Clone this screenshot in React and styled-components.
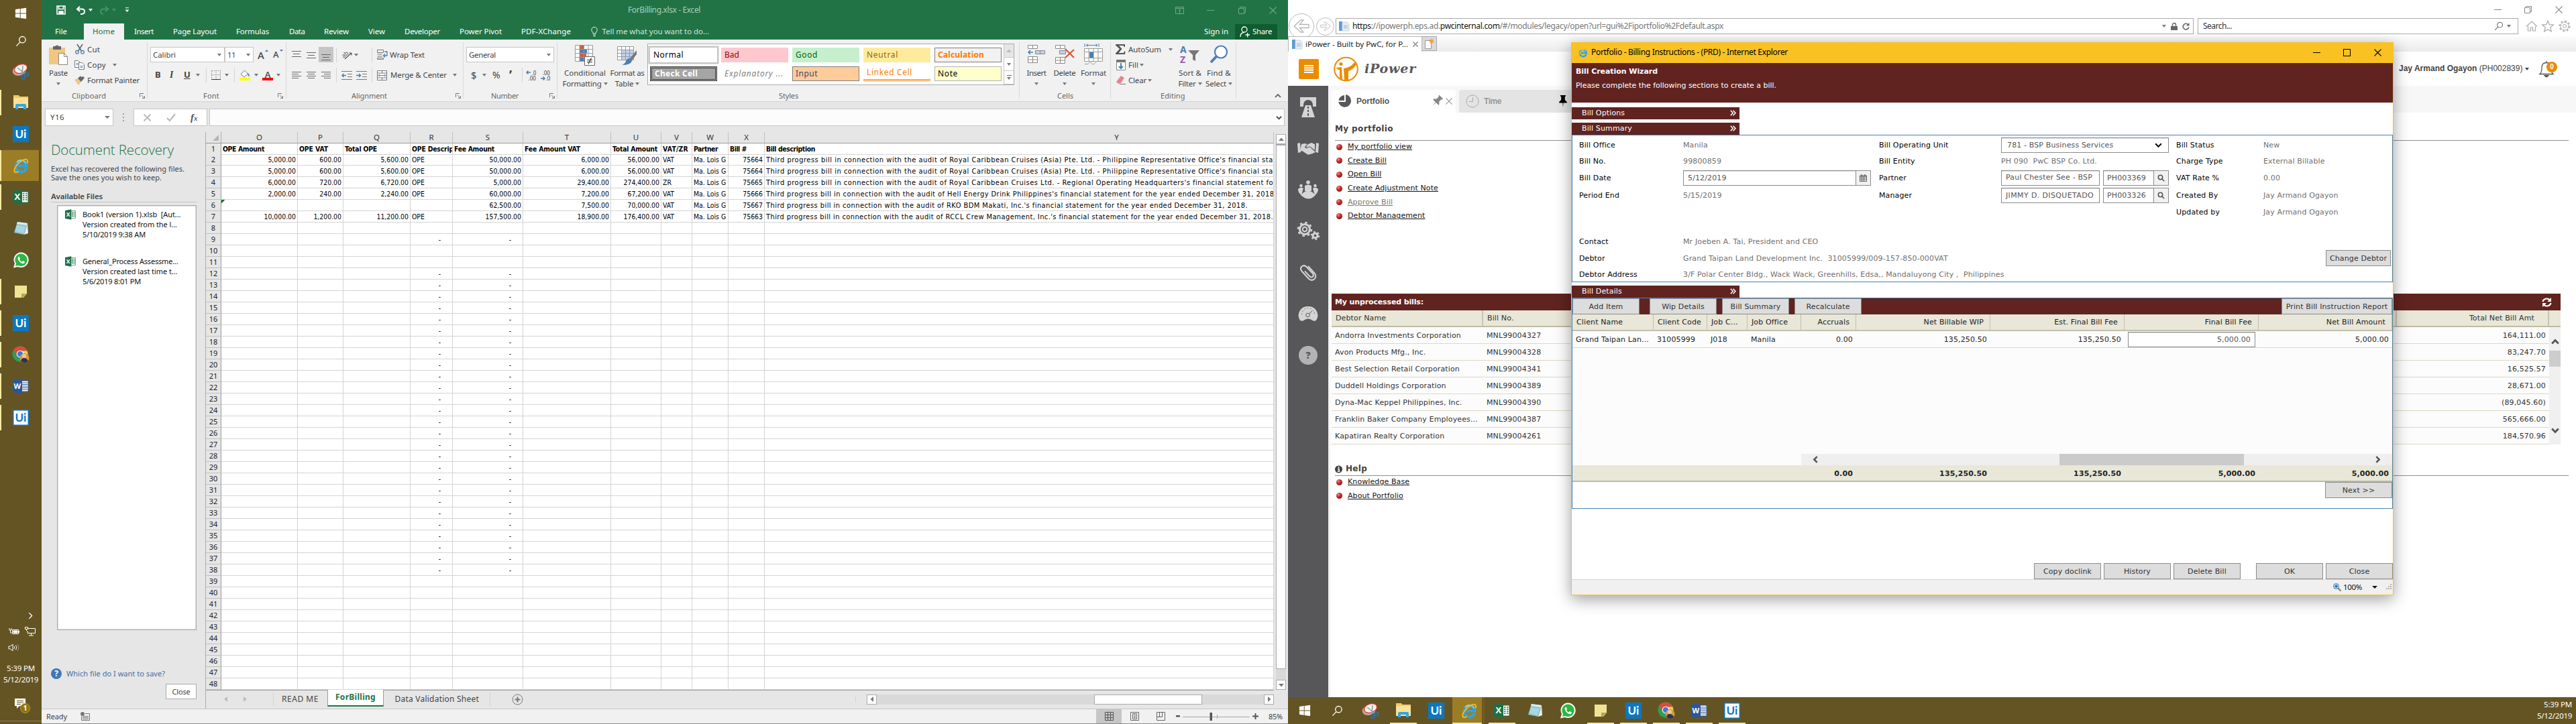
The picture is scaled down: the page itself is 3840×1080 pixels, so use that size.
import React, { useLayoutEffect, useRef, useState } from "react";
import styled, { createGlobalStyle, css } from "styled-components";

const Global = createGlobalStyle`
  *{box-sizing:border-box}
  html,body{margin:0;padding:0;background:#fff}
  body{width:3840px;height:1080px;overflow:hidden;font-family:"Noto Sans","Open Sans",sans-serif;font-size:11.5px;color:#444}
  svg{display:block;flex:none;overflow:visible}
`;

const UI = `"Noto Sans","Open Sans",sans-serif`;
const VERDANA = `"DejaVu Sans",sans-serif`;
const ARIAL = `"Liberation Sans",sans-serif`;
const CELL = `"DejaVu Sans Condensed","DejaVu Sans",sans-serif`;
const MAROON = "#602320";
const OLIVE = "#655423";
const BEIGE = "#e8e7d8";

/* ---------- text that keeps a given measure ---------- */
const Txt = styled.span`
  display:inline-block;white-space:pre;line-height:1.2;flex:none;
  ${p => p.$s && css`font-size:${p.$s}px;`}
  ${p => p.$c && css`color:${p.$c};`}
  ${p => p.$b && css`font-weight:${p.$b === true ? 700 : p.$b};`}
  ${p => p.$i && css`font-style:italic;`}
  ${p => p.$f && css`font-family:${p.$f};`}
`;
function Fit({ w, children, ...rest }) {
  const ref = useRef(null);
  const [ls, setLs] = useState(0);
  useLayoutEffect(() => {
    const el = ref.current;
    const range = document.createRange();
    range.selectNodeContents(el);
    setLs((w - range.getBoundingClientRect().width) / el.textContent.length);
  }, [w]);
  return <Txt ref={ref} style={{ letterSpacing: ls + "px" }} {...rest}>{children}</Txt>;
}

/* ---------- a row whose children start at tab stops ---------- */
const Stops = styled.div`
  display:grid;align-items:center;justify-items:start;
  padding-left:${p => p.$at[0]}px;
  grid-template-columns:${p => p.$at.slice(1).map((v, i) => `${v - p.$at[i]}px`).join(" ")} max-content;
  height:${p => p.$h}px;
  margin-top:${p => p.$mt || 0}px;
`;

const Tri = styled.i`
  width:0;height:0;border:3px solid transparent;border-bottom:0;border-top:4px solid ${p => p.$c || "#777"};
  border-left-width:${p => p.$w || 3}px;border-right-width:${p => p.$w || 3}px;
`;
const VLine = styled.i`width:1px;height:${p => p.$h || 22}px;background:#d4d4d4;`;

/* ================= icons ================= */
const WinIcon = ({ s = 20 }) => <svg width={s} height={s} viewBox="0 0 20 20" fill="#fff"><path d="M1 3.4 8.6 2.3V9.4H1zM9.6 2.2 19 .9V9.4H9.6zM1 10.5H8.6v7.1L1 16.5zM9.6 10.5H19V19L9.6 17.7z" /></svg>;
const SearchIcon = ({ s = 18, c = "#fff" }) => <svg width={s} height={s} viewBox="0 0 18 18" fill="none" stroke={c} strokeWidth="1.4"><circle cx="11" cy="6.6" r="5" /><path d="M7.5 10.2 1.5 16.5" /></svg>;
const SnipIcon = () => <svg width="26" height="26" viewBox="0 0 26 26"><ellipse cx="11" cy="12" rx="10.5" ry="7.5" transform="rotate(-20 11 12)" fill="#c9a39b" /><ellipse cx="13" cy="9.5" rx="10.5" ry="7" transform="rotate(-20 13 9.5)" fill="#d33a2c" /><ellipse cx="13" cy="9.5" rx="9.2" ry="5.8" transform="rotate(-20 13 9.5)" fill="#f4f1ef" /><path d="M8 8 19 17M16 5 15 18" stroke="#8f9aa3" strokeWidth="1.6" /><circle cx="22" cy="18" r="2.600" fill="none" stroke="#2c6fb0" strokeWidth="1.8" /><circle cx="16.500" cy="22" r="2.600" fill="none" stroke="#2c6fb0" strokeWidth="1.8" /></svg>;
const ExplorerIcon = () => <svg width="24" height="22" viewBox="0 0 24 22"><path d="M1 0h8l1.500 2H23v15H1z" fill="#f3c95c" /><path d="M1 4h22v15H1z" fill="#fbe29a" /><path d="M4 21v-6q0-2 2-2h12q2 0 2 2v6h-4v-4H8v4z" fill="#35a7e0" /></svg>;
const UiIcon = ({ inv }) => <svg width="24" height="24" viewBox="0 0 24 24"><rect width="24" height="24" fill={inv ? "#fff" : "#0a77c4"} />{inv && <rect x=".75" y=".75" width="22.5" height="22.5" fill="none" stroke="#0a77c4" strokeWidth="1.5" />}<text x="12" y="18" textAnchor="middle" fontFamily="Lato" fontWeight="700" fontSize="17" fill={inv ? "#0a77c4" : "#fff"}>Ui</text></svg>;
const IeIcon = ({ s = 24 }) => <svg width={s} height={s} viewBox="0 0 24 24" fill="none"><path d="M20.3 15.6A8 8 0 1 1 20.6 12.6H8" stroke="#2ba4e6" strokeWidth="4" /><path d="M19.6 8.5A8 8 0 0 0 6 7" stroke="#8fd8f8" strokeWidth="1.6" /><path d="M21.5 8.5c2-5-1-7.500-7-4.300C7 8 1 17 2.600 21c1 2 4 1.300 6-.2" stroke="#f5b921" strokeWidth="2" /></svg>;
const OfficeIcon = ({ k = "X", s = 24 }) => {
  const c = k === "X" ? "#1e7145" : "#2b579a";
  return <svg width={s} height={s} viewBox="0 0 24 24"><rect x="12" y="4" width="11" height="16" fill="#fff" stroke={c} strokeWidth="1" />{k === "X" ? <path d="M15 7h2.500M19 7h2.500M15 10h2.500M19 10h2.500M15 13h2.500M19 13h2.500M15 16h2.500M19 16h2.500" stroke={c} strokeWidth="1.700" /> : <path d="M14 7h8M14 9.500h8M14 12h8M14 14.500h8M14 17h8" stroke={c} strokeWidth="1.100" />}<path d="M0 3 14 .5v23L0 21z" fill={c} /><text x="6.800" y="16.300" textAnchor="middle" fontFamily="Open Sans" fontWeight="700" fontSize={k === "X" ? 13 : 11} fill="#fff">{k}</text></svg>;
};
const NotepadIcon = () => <svg width="24" height="24" viewBox="0 0 24 24"><path d="M7 2 22 4 17 21 2 18z" fill="#8ec5d2" /><path d="M7 2 22 4 21 7 6 5z" fill="#d8eef2" /><path d="M6 7 19 9 16 19 4 16z" fill="#a9d7e0" /><path d="M22 4 23 19 17 21z" fill="#e9eef0" /></svg>;
const WhatsIcon = () => <svg width="24" height="24" viewBox="0 0 24 24"><path d="M12.500.5A11 11 0 0 0 3 17L1 23.500 7.500 22A11.300 11.300 0 1 0 12.500.5z" fill="#fff" /><path d="M12.500 2.500A9.200 9.200 0 0 0 5 17l-1 4 4-1A9.300 9.300 0 1 0 12.500 2.500z" fill="#2cb742" /><path d="M9.500 6.500c-2 .5-2.500 2.500-1.500 4.500 1.500 3.500 4 5.500 7 6.200 2 .2 3-1 3-2.600l-3-1.500-1.300 1.500c-1.700-.6-3-1.900-3.700-3.500L11 9.800z" fill="#fff" /></svg>;
const StickyIcon = () => <svg width="20" height="20" viewBox="0 0 20 20"><path d="M1 1h18v12l-5 6H1z" fill="#f1e394" /><path d="M11 19v-6h8l-6 6z" fill="#b3a45c" /></svg>;
const ChromeIcon = () => <svg width="26" height="26" viewBox="0 0 26 26"><circle cx="12" cy="12" r="11.500" fill="#2e9e55" /><path d="M2 6.500A11.500 11.500 0 0 1 22.500 7.500H12A5 5 0 0 0 7.500 14z" fill="#dd4b3e" /><path d="M22.500 7.500A11.500 11.500 0 0 1 13 23.500L17 12 12 7.500z" fill="#fccd43" /><circle cx="12" cy="12" r="5.300" fill="#fff" /><circle cx="12" cy="12" r="4.200" fill="#3b78e7" /><circle cx="18.500" cy="18" r="7" fill="#d99a3c" /><circle cx="18" cy="15" r="3" fill="#e9c9ae" /><path d="M13 22.500q1-4.500 5-4.500t6 4.500q-5 5-11 0z" fill="#2c3352" /></svg>;
const Chevron = ({ d = "up", s = 10, c = "#555", w = 2 }) => {
  const p = { up: "M1 7 5 3 9 7", down: "M1 3 5 7 9 3", left: "M7 1 3 5 7 9", right: "M3 1 7 5 3 9" }[d];
  return <svg width={s} height={s} viewBox="0 0 10 10" fill="none" stroke={c} strokeWidth={w}><path d={p} /></svg>;
};
const SmallTri = ({ d = "up", c = "#777" }) => {
  const p = { up: "M0 6 4 1.500 8 6z", down: "M0 2 4 6.500 8 2z", left: "M6 0v8L1.500 4z", right: "M2 0v8l4.500-4z" }[d];
  return <svg width="8" height="8" viewBox="0 0 8 8" fill={c}><path d={p} /></svg>;
};
const WinMin = ({ c, s = 11 }) => <svg width={s} height="11" viewBox="0 0 11 11"><path d="M0 5.500H11" stroke={c} /></svg>;
const WinMax = ({ c }) => <svg width="11" height="11" viewBox="0 0 11 11"><rect x=".5" y=".5" width="10" height="10" fill="none" stroke={c} /></svg>;
const WinRestore = ({ c }) => <svg width="11" height="11" viewBox="0 0 11 11" fill="none" stroke={c}><path d="M.5 2.500h8v8h-8zM2.500 2.500v-2h8v8h-2" /></svg>;
const WinX = ({ c, s = 11, w = 1.100 }) => <svg width={s} height={s} viewBox="0 0 11 11" stroke={c} strokeWidth={w}><path d="M.5.5 10.500 10.500M10.500.5.5 10.500" /></svg>;
const Launcher = () => <svg width="8" height="8" viewBox="0 0 8 8" fill="none" stroke="#777"><path d="M.5 6V.5H6M3 3l4 4M7.500 4v3.500H4" /></svg>;
const Lines = ({ rows, w = 14, h = 14 }) => <svg width={w} height={h} viewBox={`0 0 ${w} ${h}`} stroke="#666">{rows.map(([x1, x2, y]) => <path key={y} d={`M${x1} ${y}H${x2}`} />)}</svg>;
const MagIcon = () => <svg width="11" height="11" viewBox="0 0 11 11" fill="none" stroke="#555" strokeWidth="1.600"><circle cx="4.500" cy="4.500" r="3.200" /><path d="M7 7l3.200 3.200" /></svg>;

/* ================= taskbars ================= */
const ITEMS = [
  [SnipIcon, 0], [ExplorerIcon, 1], [UiIcon, 0], [IeIcon, 2], [OfficeIcon, 1], [NotepadIcon, 0], [WhatsIcon, 0],
  [StickyIcon, 1], [UiIcon, 1], [ChromeIcon, 1], [() => <OfficeIcon k="W" />, 1], [() => <UiIcon inv />, 1],
];
const SideBar = styled.nav`width:62px;height:1080px;background:${OLIVE};display:flex;flex-direction:column;align-items:center;color:#fff;flex:none;`;
const SideItem = styled.div`
  width:62px;height:${p => p.$h || 47}px;display:flex;align-items:center;justify-content:center;
  ${p => p.$on === 1 && css`background:linear-gradient(#fbe9a4,#fbe9a4) 0 50%/2px 38px no-repeat;`}
  ${p => p.$on === 2 && css`background:linear-gradient(#fbe9a4,#fbe9a4) 0 50%/2px 46px no-repeat,linear-gradient(#9b7d26,#9b7d26) 0 50%/58px 46px no-repeat,linear-gradient(#524519,#524519) 58px 50%/1px 46px no-repeat,#6f5c26;`}
`;
const Tray = styled.div`margin-top:auto;width:62px;height:176px;display:flex;flex-direction:column;padding-top:6px;`;
const ClockText = styled.div`display:flex;flex-direction:column;align-items:center;color:#fff;gap:3px;margin-top:12px;`;
const Notice = styled.div`margin:21px auto 0;position:relative;width:18px;`;
const NoticeCount = styled.b`position:absolute;left:8px;top:7px;width:15px;height:15px;border-radius:50%;background:#8f7212;border:1px solid #b79a3c;font-size:10px;line-height:13px;text-align:center;color:#fff;`;
const BaseRule = styled.i`display:block;width:62px;height:1px;background:#8d8060;margin-top:auto;margin-bottom:4px;`;

function SideTaskbar() {
  return <SideBar>
    <SideItem $h={40}><WinIcon s={18} /></SideItem>
    <SideItem $h={42}><SearchIcon s={17} /></SideItem>
    {ITEMS.map(([I, on], i) => <SideItem key={i} $on={on}><I /></SideItem>)}
    <Tray>
      <Stops $at={[40]} $h={16}><Chevron d="right" c="#fff" w={1.200} s={11} /></Stops>
      <Stops $at={[13, 37]} $h={24} $mt={4}>
        <svg width="16" height="12" viewBox="0 0 16 12" fill="none" stroke="#fff"><path d="M5.500 3.500h9v6h-9z" /><path d="M7 5h6v3H7z" fill="#fff" /><path d="M15.500 5v3M1 1v3h3V1M2.500 4v4h2" /></svg>
        <svg width="16" height="14" viewBox="0 0 16 14" fill="none" stroke="#fff"><path d="M5 2.500h10.500v7H4V6M9.500 10v3M6 13h7M.5.5h4v3h-4zM2.500 4v2" /></svg>
      </Stops>
      <Stops $at={[12]} $h={24}><svg width="17" height="14" viewBox="0 0 17 14" fill="none" stroke="#fff"><path d="M1 5h2.500L7 2v10L3.500 9H1zM9 5q1.500 2 0 4M11.500 3.500q2.500 3.500 0 7" /><path d="M14 2q3.500 5 0 10" opacity=".4" /></svg></Stops>
      <ClockText><Fit w={42} $s={11.5}>5:39 PM</Fit><Fit w={52} $s={11.5}>5/12/2019</Fit></ClockText>
      <Notice><svg width="16" height="15" viewBox="0 0 16 15"><path d="M0 0h16v11H7l-4 4v-4H0z" fill="#fff" /><path d="M3 3.500h10M3 6h10M3 8.500h6" stroke={OLIVE} /></svg><NoticeCount>1</NoticeCount></Notice>
      <BaseRule />
    </Tray>
  </SideBar>;
}

const BottomBar = styled.nav`height:40px;background:${OLIVE};display:flex;flex:none;`;
const BottomItem = styled.div`
  width:49px;height:40px;display:flex;align-items:center;justify-content:center;
  ${p => p.$on === 1 && css`background:linear-gradient(#fbe9a4,#fbe9a4) 50% 100%/40px 2px no-repeat;`}
  ${p => p.$on === 2 && css`background:linear-gradient(#fbe9a4,#fbe9a4) 0 100%/44px 2px no-repeat,linear-gradient(#9b7d26,#9b7d26) 0 0/44px 40px no-repeat,linear-gradient(#6f5c26,#6f5c26) 45px 0/3px 40px no-repeat;`}
`;
const BottomClock = styled.div`margin-left:auto;width:52px;margin-right:6px;display:flex;flex-direction:column;align-items:flex-end;padding-top:4px;gap:3px;color:#fff;`;
const Lead = styled.i`width:${p => p.$w}px;flex:none;`;
function BottomTaskbar() {
  return <BottomBar>
    <BottomItem><WinIcon s={18} /></BottomItem>
    <BottomItem><SearchIcon s={17} /></BottomItem>
    {ITEMS.map(([I, on], i) => <BottomItem key={i} $on={on}><I /></BottomItem>)}
    <BottomClock><Fit w={42} $s={11.5}>5:39 PM</Fit><Fit w={52} $s={11.5}>5/12/2019</Fit></BottomClock>
  </BottomBar>;
}

/* ================= Excel ================= */
const ExcelWin = styled.section`width:1858px;height:1080px;display:flex;flex-direction:column;background:#e6e6e6;flex:none;`;
const Green = styled.header`background:#217346;height:59px;color:#fff;flex:none;`;
const HomeTab = styled.div`width:60px;height:24px;background:#f1f1f1;color:#217346;display:flex;align-items:center;padding-left:13px;`;
const ShareTab = styled.div`width:63px;height:23px;background:#0e5c2f;display:flex;align-items:center;gap:4px;padding-left:7px;`;

function ExcelHeader() {
  const c = "#6fa688";
  return <Green>
    <Stops $at={[22, 51, 70, 86, 105, 124, 874, 1690, 1737, 1784, 1830]} $h={30}>
      <svg width="14" height="14" viewBox="0 0 14 14" fill="none" stroke="#fff" strokeWidth="1.600"><path d="M1 1h12v12H1zM3.500 1v4.500h7V1" /><path d="M4 13V9h6v4" fill="#fff" /></svg>
      <svg width="15" height="13" viewBox="0 0 15 13" fill="none" stroke="#fff" strokeWidth="2"><path d="M6 .8 2 4.500 6 8M2 4.500h7q4 0 4 3.500T9 12H7" /></svg>
      <Tri $c="#fff" />
      <svg width="15" height="13" viewBox="0 0 15 13" fill="none" stroke="#4d9069" strokeWidth="2"><path d="M9 .8 13 4.500 9 8M13 4.500H6Q2 4.500 2 8t4 4" /></svg>
      <Tri $c="#4d9069" />
      <svg width="7" height="8" viewBox="0 0 7 8"><path d="M1 .7h5" stroke="#fff" /><path d="M.5 3.500h6l-3 3.500z" fill="#fff" /></svg>
      <Fit w={108} $s={12} $c="#a8cfb9">ForBilling.xlsx - Excel</Fit>
      <svg width="13" height="11" viewBox="0 0 13 11" fill="none" stroke={c}><path d="M.5.5h12v10H.5zM.5 2.500h12M6.500 10V4.500M4.500 6l2-1.800 2 1.800" /></svg>
      <WinMin c={c} /><WinRestore c={c} /><WinX c={c} />
    </Stops>
    <Stops $at={[20, 63, 138, 196, 290, 369, 421, 487, 541, 623, 715, 819, 835.5, 1733, 1779]} $h={24} $mt={5}>
      <Fit w={18}>File</Fit>
      <HomeTab><Fit w={33}>Home</Fit></HomeTab>
      <Fit w={29}>Insert</Fit><Fit w={65}>Page Layout</Fit><Fit w={49}>Formulas</Fit><Fit w={23.5}>Data</Fit>
      <Fit w={37}>Review</Fit><Fit w={25}>View</Fit><Fit w={53}>Developer</Fit><Fit w={63}>Power Pivot</Fit><Fit w={74}>PDF-XChange</Fit>
      <svg width="10" height="15" viewBox="0 0 10 15" fill="none" stroke="#e8f2ec"><path d="M3 10C3 7.500.8 7 .8 4.600a4.200 4.200 0 0 1 8.400 0C9.200 7 7 7.500 7 10zM3 12h4M3.500 14h3" /></svg>
      <Fit w={159.5} $c="#cfe3d8">Tell me what you want to do...</Fit>
      <Fit w={36}>Sign in</Fit>
      <ShareTab>
        <svg width="15" height="17" viewBox="0 0 15 17" fill="none" stroke="#fff" strokeWidth="1.300"><circle cx="7" cy="5" r="4" /><path d="M1 16q0-6 5-6.500M8.500 13H15M11.700 10v6.500" /></svg>
        <Fit w={29}>Share</Fit>
      </ShareTab>
    </Stops>
  </Green>;
}

const Ribbon = styled.div`height:93px;background:#f1f1f1;border-bottom:1px solid #d5d5d5;display:flex;flex:none;`;
const Group = styled.div`width:${p => p.$w}px;height:92px;background:linear-gradient(#d9d9d9,#d9d9d9) 100% 4px/1px 84px no-repeat;`;
const Body = styled.div`height:76px;display:flex;align-items:flex-start;`;
const Col = styled.div`width:${p => p.$w ? p.$w + "px" : "auto"};padding-top:${p => p.$pt || 0}px;flex:none;`;
const Big = styled.div`width:${p => p.$w}px;margin-left:${p => p.$ml || 0}px;padding-top:${p => p.$pt || 8}px;display:flex;flex-direction:column;align-items:center;flex:none;`;
const BigIcon = styled.div`height:${p => p.$h || 34}px;`;
const BigLine = styled.div`height:16px;display:flex;align-items:center;gap:3px;`;
const Combo = styled.div`width:${p => p.$w}px;height:23px;background:#fff;border:1px solid #c6c6c6;display:flex;align-items:center;justify-content:space-between;padding:0 4px 0 3px;`;
const Sel = styled.div`width:22px;height:23px;background:#c5c5c5;display:flex;align-items:center;justify-content:center;`;
const Gallery = styled.div`width:547px;height:62px;margin-top:6px;border:1px solid #ababab;background:#fff;display:flex;`;
const Swatches = styled.div`width:531px;display:grid;grid-template-columns:repeat(5,100px);grid-auto-rows:22px;gap:6px;padding:5px 0 0 3px;`;
const Swatch = styled.div`
  display:flex;align-items:center;padding-left:${p => p.$bd ? 4 : 5}px;background:${p => p.$bg || "#fff"};color:${p => p.$fg || "#000"};
  ${p => p.$bd && css`border:${p.$bd};`}
  ${p => p.$ring && css`box-shadow:0 0 0 2.500px #c6c6c6;`}
  ${p => p.$ul && css`border-bottom:3px double #ff8001;`}
`;
const GScroll = styled.div`width:15px;border-left:1px solid #c6c6c6;display:grid;grid-template-rows:20px 20px 20px;`;
const GBtn = styled.div`display:flex;flex-direction:column;gap:2px;align-items:center;justify-content:center;border-bottom:1px solid #c6c6c6;background:${p => p.$off ? "#e6e6e6" : "#fff"};`;
const Bar = styled.i`width:7px;height:1px;background:#666;`;
const FontStep = styled.div`display:flex;align-items:flex-start;gap:1px;`;

const PasteI = () => <svg width="28" height="31" viewBox="0 0 28 31"><path d="M0 4h24v25H0z" fill="#eec783" /><path d="M6 2h3q3-3 6 0h3v5H6z" fill="#666" /><path d="M14.500 12.500h8l5 5v12h-13z" fill="#fff" stroke="#888" /><path d="M22.500 12.500v5h5" fill="none" stroke="#888" /></svg>;
const CutI = () => <svg width="14" height="15" viewBox="0 0 14 15" fill="none"><path d="M3 0 9.500 10M11 0 4.500 10" stroke="#666" strokeWidth="1.600" /><circle cx="3" cy="11.800" r="2.300" stroke="#4a7fb5" strokeWidth="1.300" /><circle cx="11" cy="11.800" r="2.300" stroke="#4a7fb5" strokeWidth="1.300" /></svg>;
const CopyI = () => <svg width="15" height="14" viewBox="0 0 15 14" fill="#fff" stroke="#777"><path d="M.5.5h5l3 3v7h-8z" /><path d="M6.500 3.500h5l3 3v7h-8z" /><path d="M2.500 4.500h3M2.500 6.500h3M8.500 8.500h4M8.500 10.500h4" stroke="#4a7fb5" /></svg>;
const BrushI = () => <svg width="15" height="14" viewBox="0 0 15 14"><path d="M0 6 5 4l5 5-4 5z" fill="#eec783" /><path d="M5 4l5 5 5-6-2-2-3 1-1-2z" fill="#666" /></svg>;
const OrientI = () => <svg width="17" height="15" viewBox="0 0 17 15"><text x="1" y="11" fontSize="9" transform="rotate(-40 5 9)" fontFamily="Noto Sans" fill="#555">ab</text><path d="M5 14 15 5M15 5v3.500M15 5h-3.500" stroke="#555" strokeWidth="1.200" fill="none" /></svg>;
const WrapI = () => <svg width="16" height="15" viewBox="0 0 16 15" fill="none" stroke="#777"><path d="M.5.500h9v4h-9zM.5 7h7M.5 10h7M.5 12.500h9v2h-9z" /><path d="M11 3h4v6H9.500M12 6.500 9.500 9l2.500 2.500" stroke="#4a7fb5" strokeWidth="1.300" /></svg>;
const MergeI = () => <svg width="15" height="15" viewBox="0 0 15 15" fill="#fff" stroke="#777"><path d="M.5.500h14v14H.5zM.5 4h14M.5 11h14M7.500.5V4M7.500 11v3.500" /><path d="M2 7.500h11M4 5.500l-2 2 2 2M11 5.500l2 2-2 2" stroke="#4a7fb5" fill="none" /></svg>;
const IndentI = ({ r }) => <svg width="16" height="13" viewBox="0 0 16 13" fill="none" stroke="#777"><path d="M0 .5h16M9 4.500h7M9 8.500h7M0 12.500h16" /><path d={r ? "M0 6.500h6M4 4l2.500 2.500L4 9" : "M1 6.500h6M3.500 4 1 6.500 3.500 9"} stroke="#4a7fb5" strokeWidth="1.500" /></svg>;
const DecI = ({ inc }) => <svg width="15" height="17" viewBox="0 0 15 17" fontFamily="Noto Sans" fontSize="8" fill="#444">{inc ? <><text x="7.500" y="7.500">.0</text><text x="2.500" y="16">.00</text></> : <><text x="2.500" y="7.500">.00</text><text x="7.500" y="16">.0</text></>}<path d={inc ? "M0 4h6M2.500 1.500 0 4l2.500 2.500" : "M0 13h6M3.500 10.500 6 13l-2.500 2.500"} stroke="#4a7fb5" strokeWidth="1.500" fill="none" /></svg>;
const GridIcon = ({ children, w = 30 }) => <svg width={w} height="31" viewBox={`0 0 ${w} 31`}>{children}</svg>;
const CondI = () => <GridIcon><path d="M.5.5h26v24H.5z" fill="#fff" /><path d="M7 1h6v5H7zM7 13h10v5H7z" fill="#d65a3c" /><path d="M7 7h11v5H7zM7 19h6v5H7z" fill="#4a7fb5" /><path d="M.5.5h26v24H.5zM7 .5v24M13.500.5v24M20 .5v24M.5 6.500h26M.5 12.500h26M.5 18.500h26" fill="none" stroke="#999" /><path d="M14.500 17.500h15v13h-15z" fill="#fff" stroke="#666" /><path d="M18 22.500h8M18 25.500h8M24.500 19.500l-4.500 9" stroke="#333" strokeWidth="1.200" /></GridIcon>;
const FmtTableI = () => <GridIcon><path d="M.5 2.500h24v20H.5z" fill="#fff" /><path d="M7 8h17v14H7z" fill="#bed2ea" /><path d="M.5 2.500h24v20H.5zM6.500 2.500v20M12.500 2.500v20M18.500 2.500v20M.5 7.500h24M.5 12.500h24M.5 17.500h24" fill="none" stroke="#999" /><path d="M29 8v6l-7 9-3-3z" fill="#777" /><path d="M18 20q4 1 4 4-2 6-15 6 5-2 6-6 2-4 5-4z" fill="#4a7fb5" /></GridIcon>;
const InsI = () => <svg width="27" height="28" viewBox="0 0 27 28" fill="#fff" stroke="#888"><path d="M.5.500h14v5H.5zM7.500.5v5M.5 17.500h14v9H.5zM7.500 17.500v9M.5 22h14" /><path d="M11.500 8.500h14v5h-14zM18.500 8.500v5" fill="#bed2ea" /><path d="M1 11h7M4 8l-3 3 3 3" fill="none" stroke="#4a7fb5" strokeWidth="1.500" /></svg>;
const DelI = () => <svg width="29" height="28" viewBox="0 0 29 28" fill="#fff" stroke="#888"><path d="M.5.500h14v5H.5zM7.500.5v5M.5 18.500h14v9H.5zM7.500 18.500v9M.5 23h14" /><path d="M6.500 8.500h9v5h-9z" fill="#bed2ea" /><path d="M15 6 28 19M28 7 15 19" stroke="#d65a3c" strokeWidth="2.300" /></svg>;
const FmtI = () => <svg width="28" height="32" viewBox="0 0 28 32" fill="#fff" stroke="#999"><path d="M.5 7.500h27v19H.5zM7 7.500v19M14 7.500v19M21 7.500v19M.5 12.500h27M.5 21.500h27" /><path d="M8 13h6v8H8z" fill="#4a7fb5" stroke="none" /><path d="M1 30.500h5l3-3 3 3h3l3-3" /><path d="M1 0v5M22 0v5M3 2.500h17M6 .5 3.500 2.500 6 4.500M17.500.5 20 2.500l-2.500 2" stroke="#4a7fb5" fill="none" /></svg>;
const SortI = () => <svg width="30" height="29" viewBox="0 0 30 29"><text x="0" y="12" fontSize="14" fontWeight="700" fontFamily="Noto Sans" fill="#4a7fb5">A</text><text x="0" y="27" fontSize="14" fontWeight="700" fontFamily="Noto Sans" fill="#9a5bb5">Z</text><path d="M12 8h17l-6 7v9l-4-2v-7z" fill="#777" /></svg>;
const FindI = () => <svg width="28" height="28" viewBox="0 0 28 28" fill="#fff"><circle cx="17" cy="10.500" r="9" stroke="#4a7fb5" strokeWidth="2.200" /><path d="M10.500 17 2 26" stroke="#4a7fb5" strokeWidth="4" /></svg>;

const BigBtn = ({ w, ml, icon, l1, w1, l2, w2, ih, pt }) => <Big $w={w} $ml={ml} $pt={pt}>
  <BigIcon $h={ih}>{icon}</BigIcon>
  <BigLine><Fit w={w1}>{l1}</Fit></BigLine>
  <BigLine>{l2 && <Fit w={w2}>{l2}</Fit>}<Tri /></BigLine>
</Big>;
const Label = ({ at, w, children, launch }) => <Stops $at={launch ? [at, launch] : [at]} $h={16}><Fit w={w} $c="#666" $s={11}>{children}</Fit>{launch && <Launcher />}</Stops>;

function RibbonBar() {
  return <Ribbon>
    <Group $w={158}>
      <Body>
        <BigBtn w={40} ml={5} icon={<PasteI />} l1="Paste" w1={28} />
        <Col $pt={3}>
          <Stops $at={[5, 23]} $h={23}><CutI /><Fit w={19}>Cut</Fit></Stops>
          <Stops $at={[4, 23, 61]} $h={23}><CopyI /><Fit w={28}>Copy</Fit><Tri /></Stops>
          <Stops $at={[4, 23]} $h={23}><BrushI /><Fit w={78}>Format Painter</Fit></Stops>
        </Col>
      </Body>
      <Label at={45} w={51} launch={146}>Clipboard</Label>
    </Group>
    <Group $w={207}>
      <Body><Col $pt={11}>
        <Stops $at={[4, 115, 164, 187]} $h={23}>
          <Combo $w={111}><Fit w={34}>Calibri</Fit><Tri /></Combo>
          <Combo $w={43}><Fit w={12}>11</Fit><Tri /></Combo>
          <FontStep><Txt $s={15} $b={500}>A</Txt><svg width="5" height="4" viewBox="0 0 5 4"><path d="M0 4 2.500 1 5 4z" fill="#4a7fb5" /></svg></FontStep>
          <FontStep><Txt $s={13} $b={500}>A</Txt><svg width="5" height="4" viewBox="0 0 5 4"><path d="M0 0 2.500 3 5 0z" fill="#4a7fb5" /></svg></FontStep>
        </Stops>
        <Stops $at={[11, 33, 54, 72, 86.5, 95, 115, 129, 137, 159, 171, 192]} $h={22} $mt={8}>
          <Txt $b $s={13}>B</Txt><Txt $b $i $s={14} $f={`"Liberation Serif",serif`}>I</Txt><Txt $b $s={13}><u>U</u></Txt><Tri /><VLine />
          <svg width="14" height="14" viewBox="0 0 14 14" fill="none" stroke="#888" strokeDasharray="1.500 1.500"><path d="M.5.500h13M.5.500v13M7 0v13M13.500 0v13M0 6.500h13" /><path d="M0 13.500h14" stroke="#333" strokeDasharray="none" /></svg>
          <Tri /><VLine />
          <svg width="16" height="16" viewBox="0 0 16 16"><path d="M2 6.500 7.500 1l5 5-5.500 5z" fill="#fff" stroke="#777" /><path d="M12 5q3.500 1 2.500 5.500Q12 9 12 5z" fill="#4a7fb5" /><path d="M0 12h16v4H0z" fill="#ff0" /></svg>
          <Tri />
          <svg width="16" height="16" viewBox="0 0 16 16"><text x="8" y="11.500" textAnchor="middle" fontSize="13" fontWeight="600" fontFamily="Noto Sans" fill="#555">A</text><path d="M0 12h16v4H0z" fill="red" /></svg>
          <Tri />
        </Stops>
      </Col></Body>
      <Label at={83} w={24} launch={194}>Font</Label>
    </Group>
    <Group $w={264}>
      <Body><Col $pt={11}>
        <Stops $at={[8, 30, 48, 74, 82, 101, 127, 135, 154]} $h={23}>
          <Lines h={18} rows={[[0, 14, 3.5], [2, 12, 7.5], [0, 14, 11.5]]} /><Lines h={18} rows={[[0, 14, 5.5], [2, 12, 9.5], [0, 14, 13.5]]} />
          <Sel><Lines h={18} rows={[[0, 14, 8.5], [2, 12, 12.5], [0, 14, 16.5]]} /></Sel><VLine /><OrientI /><Tri /><VLine /><WrapI /><Fit w={52}>Wrap Text</Fit>
        </Stops>
        <Stops $at={[8, 30, 52, 74, 82, 104, 127, 135, 155, 248]} $h={24} $mt={7}>
          <Lines rows={[[0, 14, 2.5], [0, 10, 5.5], [0, 14, 8.5], [0, 10, 11.5]]} /><Lines rows={[[0, 14, 2.5], [2, 12, 5.5], [0, 14, 8.5], [2, 12, 11.5]]} /><Lines rows={[[0, 14, 2.5], [4, 14, 5.5], [0, 14, 8.5], [4, 14, 11.5]]} />
          <VLine /><IndentI /><IndentI r /><VLine /><MergeI /><Fit w={84}>Merge &amp; Center</Fit><Tri />
        </Stops>
      </Col></Body>
      <Label at={97} w={53} launch={252}>Alignment</Label>
    </Group>
    <Group $w={140}>
      <Body><Col $pt={11}>
        <Stops $at={[4]} $h={23}><Combo $w={131}><Fit w={40}>General</Fit><Tri /></Combo></Stops>
        <Stops $at={[11, 28, 43, 68, 86.5, 94, 115]} $h={24} $mt={7}>
          <Txt $s={15}>$</Txt><Tri /><Txt $s={14}>%</Txt><Txt $s={19} $b>’</Txt><VLine /><DecI inc /><DecI />
        </Stops>
      </Col></Body>
      <Label at={41} w={41} launch={128}>Number</Label>
    </Group>
    <Group $w={689}>
      <Body>
        <BigBtn w={70} ml={6} icon={<CondI />} l1="Conditional" w1={62} l2="Formatting" w2={58} />
        <BigBtn w={56} ml={0} icon={<FmtTableI />} l1="Format as" w1={51} l2="Table" w2={27.5} />
        <Col $w={2} />
        <Gallery>
          <Swatches>
            <Swatch $ring><Fit w={45} $s={12}>Normal</Fit></Swatch>
            <Swatch $bg="#ffc7ce" $fg="#9c0006"><Fit w={22} $s={12}>Bad</Fit></Swatch>
            <Swatch $bg="#c6efce" $fg="#006100"><Fit w={33} $s={12}>Good</Fit></Swatch>
            <Swatch $bg="#ffeb9c" $fg="#9c6500"><Fit w={47} $s={12}>Neutral</Fit></Swatch>
            <Swatch $bg="#f2f2f2" $fg="#fa7d00" $bd="1px solid #7f7f7f"><Fit w={69} $s={12} $b>Calculation</Fit></Swatch>
            <Swatch $bg="#a5a5a5" $fg="#fff" $bd="3px double #3f3f3f"><Fit w={64} $s={12} $b>Check Cell</Fit></Swatch>
            <Swatch $fg="#7f7f7f"><Fit w={88} $s={12} $i>Explanatory ...</Fit></Swatch>
            <Swatch $bg="#ffcc99" $fg="#3f3f76" $bd="1px solid #7f7f7f"><Fit w={33} $s={12}>Input</Fit></Swatch>
            <Swatch $fg="#fa7d00" $ul><Fit w={68} $s={12}>Linked Cell</Fit></Swatch>
            <Swatch $bg="#ffffcc" $bd="1px solid #b2b2b2"><Fit w={30} $s={12}>Note</Fit></Swatch>
          </Swatches>
          <GScroll><GBtn $off><SmallTri c="#bbb" /></GBtn><GBtn><Tri /></GBtn><GBtn><Bar /><Tri /></GBtn></GScroll>
        </Gallery>
      </Body>
      <Label at={330} w={29}>Styles</Label>
    </Group>
    <Group $w={136}>
      <Body>
        <BigBtn w={42} ml={4} icon={<InsI />} l1="Insert" w1={29} />
        <BigBtn w={42} icon={<DelI />} l1="Delete" w1={33} />
        <BigBtn w={44} pt={6} ih={36} icon={<FmtI />} l1="Format" w1={38} />
      </Body>
      <Label at={56} w={24}>Cells</Label>
    </Group>
    <Group $w={187}>
      <Body>
        <Col $w={93} $pt={3}>
          <Stops $at={[7, 26, 86]} $h={23}><svg width="15" height="15" viewBox="0 0 15 15"><path d="M0 0h14v4h-1.500l-.5-2H5l4.500 5L4.500 13H12l1-2.500h1.500L14 15H0v-1.500L6 7 0 1.500z" fill="#555" /></svg><Fit w={49}>AutoSum</Fit><Tri /></Stops>
          <Stops $at={[8, 26, 43]} $h={23}><svg width="14" height="16" viewBox="0 0 14 16"><path d="M.5.500h13v15H.5z" fill="#fff" stroke="#888" /><path d="M0 0h14v4H0z" fill="#777" /><path d="M7 5v8M4 10l3 3 3-3" stroke="#4a7fb5" strokeWidth="2" fill="none" /></svg><Fit w={15}>Fill</Fit><Tri /></Stops>
          <Stops $at={[8, 26, 55]} $h={23}><svg width="14" height="13" viewBox="0 0 14 13"><path d="M7 0 12 3 7 11 3 12 0 9z" fill="#e8838f" /><path d="M5 12.500h9" stroke="#777" /></svg><Fit w={27}>Clear</Fit><Tri /></Stops>
        </Col>
        <BigBtn w={44} ml={3} icon={<SortI />} l1="Sort &amp;" w1={34} l2="Filter" w2={26} />
        <BigBtn w={42} icon={<FindI />} l1="Find &amp;" w1={36} l2="Select" w2={31} />
      </Body>
      <Label at={74} w={36.5}>Editing</Label>
    </Group>
    <Col $pt={79}><Stops $at={[57]} $h={10}><Chevron d="up" s={10} c="#666" w={1.8} /></Stops></Col>
  </Ribbon>;
}

const FormulaRow = styled.div`height:45px;padding:10px 0 0 5px;display:flex;flex:none;`;
const FBox = styled.div`height:26px;width:${p => p.$w}px;margin-left:${p => p.$ml || 0}px;background:${p => p.$bg || "#fff"};border:1px solid #c6c6c6;`;
const Dots = styled.i`width:2px;height:12px;margin:7px 13px 0 14px;background:repeating-linear-gradient(#a0a0a0 0 2px,transparent 2px 5px);`;
const FnMark = styled.span`font:italic 700 15px/1 "Liberation Serif",serif;color:#555;white-space:pre;`;
const FnSmall = styled.span`font-size:11px;`;
const Main = styled.div`display:flex;height:860px;flex:none;`;

const Pane = styled.aside`width:245px;height:860px;border-right:1px solid #ababab;padding:14px 13px 0 14px;display:flex;flex-direction:column;`;
const PaneText = styled.div`display:flex;flex-direction:column;align-items:flex-start;margin-top:9px;line-height:1;height:40px;`;
const PaneHead = styled.div`border-bottom:1px solid #c6c6c6;height:17px;`;
const FileList = styled.div`margin:4px 0 0 9px;width:208px;height:634px;border:1px solid #ababab;box-shadow:inset 0 0 0 1px #ddd;background:#fff;color:#111;padding:5px 0 0 11px;`;
const FileItem = styled.div`display:flex;gap:10px;height:70px;`;
const FileLines = styled.div`display:grid;grid-auto-rows:15px;align-items:center;justify-items:start;height:45px;`;
const HelpRow = styled.div`display:flex;align-items:center;gap:7px;margin-top:56px;height:18px;`;
const CloseBtn = styled.div`width:46px;height:23px;border:1px solid #ababab;background:#fdfdfd;margin:6px 0 0 171px;display:flex;align-items:center;justify-content:center;`;

function RecoveryPane() {
  return <Pane>
    <Fit w={183} $s={20.5} $c="#217346" $b={300} $f={`"Open Sans","Noto Sans",sans-serif`}>Document Recovery</Fit>
    <PaneText><Fit w={199} $s={11}>Excel has recovered the following files.</Fit><Fit w={165} $s={11}>Save the ones you wish to keep.</Fit></PaneText>
    <PaneHead><Fit w={77} $b={600} $s={11.5}>Available Files</Fit></PaneHead>
    <FileList>
      <FileItem><OfficeIcon s={16} /><FileLines><Fit w={146.5} $s={11}>Book1 (version 1).xlsb  [Aut...</Fit><Fit w={141} $s={11}>Version created from the l...</Fit><Fit w={94} $s={11}>5/10/2019 9:38 AM</Fit></FileLines></FileItem>
      <FileItem><OfficeIcon s={16} /><FileLines><Fit w={142.5} $s={11}>General_Process Assessme...</Fit><Fit w={141.5} $s={11}>Version created last time t...</Fit><Fit w={87} $s={11}>5/6/2019 8:01 PM</Fit></FileLines></FileItem>
    </FileList>
    <HelpRow><svg width="16" height="16" viewBox="0 0 16 16"><circle cx="8" cy="8" r="8" fill="#3f78b5" /><text x="8" y="12.300" textAnchor="middle" fontFamily="Noto Sans" fontWeight="700" fontSize="12" fill="#fff">?</text></svg><Fit w={147} $s={11} $c="#3f70a5">Which file do I want to save?</Fit></HelpRow>
    <CloseBtn><Fit w={27} $s={11}>Close</Fit></CloseBtn>
  </Pane>;
}

const Sheet = styled.div`width:1613px;height:860px;`;
const SheetTop = styled.div`display:flex;height:832px;`;
const Grid = styled.div`width:1592px;height:833px;overflow:hidden;border-bottom:1px solid #9b9b9b;font-family:${CELL};font-size:10.4px;color:#000;background:#fff;`;
const COLS = [23, 114, 68, 100, 63, 105, 131, 75, 46, 54, 54, 759];
const GRow = styled.div`display:grid;grid-template-columns:${COLS.map(c => c + "px").join(" ")};height:${p => p.$h || 17}px;`;
const HCell = styled.div`background:#e6e6e6;border-right:1px solid ${p => p.$dark ? "#ababab" : "#c0c0c0"};border-bottom:1px solid #9b9b9b;text-align:center;line-height:15px;font-family:${UI};font-size:11.5px;color:#333;padding-left:${p => p.$wide ? 291 : 0}px;`;
const RCell = styled.div`background:#e6e6e6;border-right:1px solid #9b9b9b;border-bottom:1px solid #c0c0c0;text-align:center;line-height:16px;font-family:${UI};font-size:11px;color:#222;`;
const Cell = styled.div`
  border-right:1px solid #d4d4d4;border-bottom:1px solid #d4d4d4;overflow:hidden;white-space:pre;line-height:16px;padding:0 2px 0 2px;
  text-align:${p => p.$r ? "right" : "left"};font-weight:${p => p.$b ? 700 : 400};
  ${p => p.$dash && css`padding-right:17px;`}
  ${p => p.$flag && css`background:linear-gradient(135deg,#107c10 0 4px,transparent 4px);`}
`;
const HEAD = ["OPE Amount", "OPE VAT", "Total OPE", "OPE Descrip", "Fee Amount", "Fee Amount VAT", "Total Amount", "VAT/ZR", "Partner", "Bill #", "Bill description"];
const HW = [62, 43, 48, 62, 60, 83, 67, 38, 36, 25, 73];
const T3 = "Third progress bill in connection with the audit of ";
const DATA = [
  ["5,000.00", "600.00", "5,600.00", "OPE", "50,000.00", "6,000.00", "56,000.00", "VAT", "Ma. Lois G", "75664", [T3 + "Royal Caribbean Cruises (Asia) Pte. Ltd. - Philippine Representative Office's financial stat", 760]],
  ["5,000.00", "600.00", "5,600.00", "OPE", "50,000.00", "6,000.00", "56,000.00", "VAT", "Ma. Lois G", "75664", [T3 + "Royal Caribbean Cruises (Asia) Pte. Ltd. - Philippine Representative Office's financial stat", 760]],
  ["6,000.00", "720.00", "6,720.00", "OPE", "5,000.00", "29,400.00", "274,400.00", "ZR", "Ma. Lois G", "75665", [T3 + "Royal Caribbean Cruises Ltd. - Regional Operating Headquarters's financial statement fo", 756]],
  ["2,000.00", "240.00", "2,240.00", "OPE", "60,000.00", "7,200.00", "67,200.00", "VAT", "Ma. Lois G", "75666", [T3 + "Hell Energy Drink Philippines's financial statement for the year ended December 31, 2018.", 761]],
  ["", "", "", "", "62,500.00", "7,500.00", "70,000.00", "VAT", "Ma. Lois G", "75667", [T3 + "RKO BDM Makati, Inc.'s financial statement for the year ended December 31, 2018.", 718]],
  ["10,000.00", "1,200.00", "11,200.00", "OPE", "157,500.00", "18,900.00", "176,400.00", "VAT", "Ma. Lois G", "75663", [T3 + "RCCL Crew Management, Inc.'s financial statement for the year ended December 31, 2018.", 756]],
];
const RIGHT = { 0: 1, 1: 1, 2: 1, 4: 1, 5: 1, 6: 1, 9: 1 };

const VScroll = styled.div`width:15px;margin:3px 0 0 3px;display:flex;flex-direction:column;background:#d9d9d9;height:829px;`;
const SBtn = styled.div`width:15px;height:15px;background:#fff;border:1px solid #ababab;display:flex;align-items:center;justify-content:center;flex:none;`;
const DownBtn = styled(SBtn)`margin-top:auto;`;
const VThumb = styled.div`height:783px;background:#fff;border:1px solid #ababab;border-top:2px solid #ababab;`;
const ActiveTab = styled.div`width:84px;height:25px;margin-top:-3px;background:#fff;border:1px solid #9b9b9b;border-top:0;border-bottom:2px solid #217346;display:flex;align-items:center;justify-content:center;`;
const HScroll = styled.div`width:607px;height:15px;background:#d9d9d9;display:flex;`;
const HThumb = styled.div`width:161px;height:15px;background:#fff;border:1px solid #ababab;margin:0 92px 0 324px;`;
const Plus = () => <svg width="17" height="17" viewBox="0 0 17 17" fill="none" stroke="#777"><circle cx="8.500" cy="8.500" r="7.500" /><path d="M8.500 4.500v8M4.500 8.500h8" strokeWidth="2" /></svg>;

function SheetArea() {
  return <Sheet>
    <SheetTop>
      <Grid>
        <GRow $h={17}>{["", ..."OPQRSTUVWXY"].map((c, i) => <HCell key={i} $dark={!i} $wide={c === "Y"}>{i ? c : <svg width="22" height="15" viewBox="0 0 22 15"><path d="M19 4v9H10z" fill="#b5b5b5" /></svg>}</HCell>)}</GRow>
        <GRow $h={16}><RCell>1</RCell>{HEAD.map((h, i) => <Cell key={h} $b><Fit w={HW[i]}>{h}</Fit></Cell>)}</GRow>
        {Array.from({ length: 47 }, (_, k) => {
          const n = k + 2, d = DATA[k];
          const dash = n === 9 || (n > 11 && n < 39);
          return <GRow key={n}><RCell>{n}</RCell>{HEAD.map((_, i) => {
            if (d) return <Cell key={i} $r={RIGHT[i]} $flag={n === 6 && i === 0}>{i === 10 ? <Fit w={d[10][1]} $s={11}>{d[10][0]}</Fit> : d[i]}</Cell>;
            return dash && (i === 3 || i === 4) ? <Cell key={i} $r $dash>-</Cell> : <Cell key={i} />;
          })}</GRow>;
        })}
      </Grid>
      <VScroll><SBtn><SmallTri /></SBtn><VThumb /><DownBtn><SmallTri d="down" /></DownBtn></VScroll>
    </SheetTop>
    <Stops $at={[27, 56, 100, 113, 181, 281.5, 423, 456, 968, 985]} $h={28}>
      <svg width="5" height="8" viewBox="0 0 5 8"><path d="M5 0v8L0 4z" fill="#bbb" /></svg>
      <svg width="5" height="8" viewBox="0 0 5 8"><path d="M0 0v8l5-4z" fill="#bbb" /></svg>
      <VLine $h={20} />
      <Fit w={55} $s={12}>READ ME</Fit>
      <ActiveTab><Fit w={60} $s={12} $b $c="#217346">ForBilling</Fit></ActiveTab>
      <Fit w={125.5} $s={12}>Data Validation Sheet</Fit>
      <VLine $h={20} />
      <Plus />
      <VLine $h={10} />
      <HScroll><SBtn><SmallTri d="left" /></SBtn><HThumb /><SBtn><SmallTri d="right" /></SBtn></HScroll>
    </Stops>
  </Sheet>;
}

const Status = styled.footer`height:23px;background:#f1f1f1;border-top:1px solid #c6c6c6;border-bottom:1px solid #8a8a8a;flex:none;`;
const ViewSel = styled.div`width:38px;height:21px;background:#c6c6c6;display:flex;align-items:center;justify-content:center;`;
const ZLine = () => <svg width="100" height="14" viewBox="0 0 100 14"><path d="M0 7.500h100M51.500 4v6" stroke="#a5a5a5" /><path d="M40.500 1h3.500v12h-3.500z" fill="#555" /></svg>;

function Excel() {
  return <ExcelWin>
    <ExcelHeader />
    <RibbonBar />
    <FormulaRow>
      <FBox $w={102}><Stops $at={[7, 88]} $h={24}><Fit w={21}>Y16</Fit><Tri $w={4} /></Stops></FBox>
      <Dots />
      <FBox $w={110} $ml={1}><Stops $at={[14, 48, 84]} $h={24}>
        <WinX c="#bbb" w={2} s={11} />
        <svg width="14" height="12" viewBox="0 0 14 12" fill="none" stroke="#bbb" strokeWidth="2.300"><path d="M1 7l4 4 8-10" /></svg>
        <FnMark>f<FnSmall>x</FnSmall></FnMark>
      </Stops></FBox>
      <FBox $w={1603} $ml={3} $bg="#fcfcfc"><Stops $at={[1589]} $h={24}><Chevron d="down" s={9} c="#555" w={2.200} /></Stops></FBox>
    </FormulaRow>
    <Main><RecoveryPane /><SheetArea /></Main>
    <Status>
      <Stops $at={[7, 58, 1572, 1623, 1662, 1691, 1701, 1805, 1829]} $h={21}>
        <Fit w={31} $s={11}>Ready</Fit>
        <svg width="14" height="13" viewBox="0 0 14 13" fill="none" stroke="#777"><circle cx="3" cy="3" r="3" fill="#777" stroke="none" /><path d="M1.500 6.500v6h12v-10H7M3 6.500h9M3 8.500h9M3 10.500h9" /></svg>
        <ViewSel><svg width="13" height="13" viewBox="0 0 13 13" fill="none" stroke="#555"><path d="M.5.500h12v12H.5zM4.500.5v12M8.500.5v12M.5 4.500h12M.5 8.500h12" /></svg></ViewSel>
        <svg width="13" height="13" viewBox="0 0 13 13" fill="none" stroke="#666"><path d="M.5.500h12v12H.5zM3.500 2.500h6v8h-6zM5 4.500h3M5 6.500h3M5 8.500h3" /></svg>
        <svg width="13" height="13" viewBox="0 0 13 13" fill="none" stroke="#666"><path d="M.5.500h12v12H.5zM4.500.5v7M8.500.5v7M.5 7.500h8" /></svg>
        <svg width="6" height="3" viewBox="0 0 6 3"><path d="M0 0h6v2.500H0z" fill="#555" /></svg>
        <ZLine />
        <svg width="9" height="9" viewBox="0 0 9 9" stroke="#555" strokeWidth="2"><path d="M4.500 0v9M0 4.500h9" /></svg>
        <Fit w={21} $s={11}>85%</Fit>
      </Stops>
    </Status>
  </ExcelWin>;
}

/* ================= browser ================= */
const Browser = styled.section`width:1920px;height:1080px;display:flex;flex-direction:column;background:#fff;position:relative;flex:none;`;
const Nav = styled.div`height:54px;overflow:hidden;flex:none;`;
const NavTop = styled.div`height:20px;padding-top:8px;`;
const Circle = styled.div`width:${p => p.$d}px;height:${p => p.$d}px;border:1px solid #b9b9b9;border-radius:50%;display:flex;align-items:center;justify-content:center;`;
const Field = styled.div`width:${p => p.$w}px;height:24px;border:1px solid #aaa;background:#fff;display:flex;align-items:center;padding-left:${p => p.$pl}px;color:#777;`;
const FieldEnd = styled.div`margin-left:auto;margin-right:${p => p.$mr}px;display:flex;align-items:center;gap:${p => p.$gap}px;`;
const Ink = styled.span`color:#111;`;
const TabRow = styled.div`height:23px;display:flex;background:linear-gradient(#fcfcfc,#ebebeb);flex:none;`;
const PageTab = styled.div`width:200px;background:#fff;border:1px solid #b5b5b5;border-bottom:0;display:flex;align-items:center;padding-left:5px;color:#222;`;
const NewTab = styled.div`width:22px;height:22px;background:#d9d9d9;border:1px solid #aaa;border-left:0;display:flex;align-items:center;justify-content:center;`;
const PageIcon = () => <svg width="16" height="16" viewBox="0 0 16 16"><path d="M0 1h5v14H0z" fill="#5b9bd5" /><path d="M5 2h7l3 3v10H5z" fill="#e8eef4" stroke="#c9d3dc" /><path d="M7 7h6M7 9h6M7 11h6" stroke="#a9b8c6" /></svg>;
const Arrow = ({ s, flip }) => <svg width={s} height={s} viewBox="0 0 24 24" fill="none" stroke="#b5b5b5" strokeWidth="1.300" transform={flip ? "scale(-1,1)" : undefined}><path d="M1 12 11 3h4L9.500 9.500H23v5H9.500L15 21h-4z" /></svg>;

const AppHead = styled.div`height:51px;flex:none;`;
const Burger = styled.div`width:30px;height:30px;border-radius:2px;background:#eb8c00;display:flex;align-items:center;justify-content:center;`;
const BellBox = styled.div`position:relative;width:26px;height:26px;`;
const BellCount = styled.b`position:absolute;left:13px;top:2px;width:16px;height:16px;border-radius:50%;background:#eb8c00;color:#fff;font:700 10px/16px ${ARIAL};text-align:center;`;
const Work = styled.div`display:flex;height:912px;flex:none;`;
const Rail = styled.div`width:60px;background:#57575a;display:grid;grid-auto-rows:61.700px;align-content:start;justify-items:center;align-items:center;padding-top:1px;flex:none;`;
const Page = styled.div`flex:1;box-shadow:inset 5px 0 5px -3px rgba(0,0,0,.09);`;
const TabBand = styled.div`height:40px;background:#f7f7f7;padding:6px 0 0 5px;display:flex;gap:5px;font-family:${ARIAL};font-weight:700;font-size:12px;`;
const AppTab = styled.div`width:${p => p.$w}px;height:34px;border-radius:4px 4px 0 0;background:${p => p.$on ? "#fff" : "#e4e4e4"};color:${p => p.$on ? "#555" : "#999"};`;
const Heading = styled.h2`margin:${p => p.$mt}px 11px 0 10px;height:${p => p.$h}px;border-bottom:1px solid #8f8f8f;font:700 12px/1.2 ${VERDANA};color:#404041;display:flex;align-items:center;gap:5px;padding-bottom:${p => p.$pb || 0}px;`;
const Links = styled.ul`list-style:none;margin:-1px 0 0;padding:0 0 0 12px;height:${p => p.$h}px;font:11px/20.600px ${VERDANA};letter-spacing:.1px;`;
const LinkRow = styled.li`display:flex;align-items:center;gap:8px;color:${p => p.$off ? "#777" : "#111"};height:20.600px;`;
const LinkText = styled.a`text-decoration:underline;text-underline-offset:1px;line-height:16px;`;
const Dot = styled.i`width:9px;height:9px;border-radius:50%;background:radial-gradient(circle at 35% 30%,#e88 0,#b22 45%,#711 100%);`;
const Bills = styled.div`margin-left:5px;width:1832px;font:11px ${VERDANA};letter-spacing:.13px;color:#333;`;
const BillsBar = styled.div`height:25px;background:${MAROON};color:#fff;font-weight:700;display:flex;align-items:center;justify-content:space-between;padding:0 13px 0 5px;`;
const BRow = styled.div`display:grid;grid-template-columns:226px 1362px 227px;height:25px;align-items:center;background:#fcfcfc;border-bottom:1px solid #ddd8c4;`;
const BHead = styled(BRow)`grid-template-columns:226px 1362px 227px 17px;background:${BEIGE};border-bottom:2px solid #bfbaa6;align-items:stretch;`;
const BCell = styled.div`padding-left:${p => p.$p || 5}px;display:flex;align-items:center;justify-content:${p => p.$r ? "flex-end" : "flex-start"};padding-right:${p => p.$r || 0}px;${p => p.$sep && css`border-right:2px solid #c9c5b2;`}`;
const BBody = styled.div`display:flex;`;
const BScroll = styled.div`width:17px;background:#f0f0f0;display:flex;flex-direction:column;align-items:center;padding-top:16px;`;
const BThumb = styled.i`width:17px;height:24px;background:#cdcdcd;margin:7px 0 89px;`;

const BILLS = [
  ["Andorra Investments Corporation", "MNL99004327", "164,111.00"], ["Avon Products Mfg., Inc.", "MNL99004328", "83,247.70"],
  ["Best Selection Retail Corporation", "MNL99004341", "16,525.57"], ["Duddell Holdings Corporation", "MNL99004389", "28,671.00"],
  ["Dyna-Mac Keppel Philippines, Inc.", "MNL99004390", "(89,045.60)"], ["Franklin Baker Company Employees...", "MNL99004387", "565,666.00"],
  ["Kapatiran Realty Corporation", "MNL99004261", "184,570.96"],
];
const C = "#d4d4d4";
const RailIcons = [
  <svg width="26" height="30" viewBox="0 0 26 30" fill={C}><path d="M1 0h24v14h-5v-3a7 7 0 0 0-14 0v3H1z" /><path d="M9 12h8l6 18H3z" /><path d="M13 14v3M13 19v3M13 24v4" stroke="#57575a" strokeWidth="2" /></svg>,
  <svg width="34" height="20" viewBox="0 0 34 20" fill={C}><path d="M1 2l4-1 1 14-4 1zM33 2l-4-1-1 14 4 1z" /><path d="M7 3l5-1 4 1-4 4q1 3 4 2l3-2 8 7q1 2-2 2-1 2-3 1-1 2-3 1l-2 1-9-6-3 1z" /><path d="M17 3l5-2 5 2v9l-8-6-3 2q-2 0-2-1z" /></svg>,
  <svg width="30" height="28" viewBox="0 0 30 28" fill={C}><circle cx="15" cy="3" r="2.800" /><circle cx="4.500" cy="8" r="2.300" /><circle cx="25.500" cy="8" r="2.300" /><path d="M10 8q5-3 10 0v8H10zM0 13q4-4 8-1l-3 10q-5-3-5-9zM30 13q-4-4-8-1l3 10q5-3 5-9z" /><path d="M4 22q11-13 22 0-10 11-22 0z" /></svg>,
  <svg width="34" height="28" viewBox="0 0 34 28" fill="none" stroke={C}><circle cx="12" cy="11" r="7.500" strokeWidth="3" /><circle cx="12" cy="11" r="10" strokeWidth="2.500" strokeDasharray="3.500 4.350" /><circle cx="12" cy="11" r="3.300" strokeWidth="2" /><circle cx="27.500" cy="20.500" r="3.500" strokeWidth="3.200" /><circle cx="27.500" cy="20.500" r="5.800" strokeWidth="2" strokeDasharray="2.600 3.450" /></svg>,
  <svg width="26" height="26" viewBox="0 0 26 26" fill="none" stroke={C} strokeWidth="2"><path d="M13 3 23 14q3 5-1 8.500-4 3-8-.5L3.500 10.500q-3-4 0-7 3.500-3 7 .5L20 14q2 2.500 0 4.500t-4.500 0L8 10.500" /></svg>,
  <svg width="28" height="24" viewBox="0 0 28 24"><path d="M2 22A13.500 13.500 0 0 1 14 1a13.500 13.500 0 0 1 12 21q-4 2-7-1-5-3-10 0-3 3-7 1z" fill={C} /><path d="M4.500 13a9.500 9.500 0 0 1 19 0" fill="none" stroke="#57575a" strokeDasharray="1.500 3" /><circle cx="13.500" cy="14" r="2.800" fill="none" stroke="#57575a" /><path d="M15.500 12 20 8" stroke="#57575a" /></svg>,
  <svg width="28" height="28" viewBox="0 0 28 28"><circle cx="14" cy="14" r="14" fill="#b3b3b3" /><text x="14" y="19" textAnchor="middle" fontFamily="Open Sans" fontWeight="800" fontSize="14" fill="#57575a">?</text></svg>,
];
const PinI = ({ c, tilt }) => <svg width="16" height="18" viewBox="0 0 16 18" fill={c}><g transform={tilt ? "rotate(45 8 9)" : undefined}><path d="M4 0h8v1.500l-1.200.8V7l3 3v1.500H2.200V10l3-3V2.300L4 1.500z" /><path d="M7.400 11h1.200L8 18z" /></g></svg>;

function BrowserPage() {
  return <>
    <AppHead>
      <Stops $at={[16, 68, 114, 1656, 1844, 1863]} $h={51}>
        <Burger><svg width="14" height="12" viewBox="0 0 14 12" stroke="#fff" strokeWidth="2"><path d="M0 1h14M0 4.300h14M0 7.600h14M0 11h14" /></svg></Burger>
        <svg width="37" height="38" viewBox="0 0 37 38"><circle cx="18.500" cy="19" r="17.300" fill="none" stroke="#eb8c00" strokeWidth="2" /><circle cx="11" cy="11.500" r="2.600" fill="#eb8c00" /><path d="M3 17 12 16l1 19-4-2.500V21zM15 18q10-1 16-9l3 3q-5 8-12 10v13l-6 1z" fill="#eb8c00" /></svg>
        <Fit w={77} $s={19} $b $i $c="#58585a" $f={`"DejaVu Serif",serif`}>iPower</Fit>
        <Fit w={184.5} $s={12} $c="#444" $f={ARIAL}><b>Jay Armand Ogayon</b> (PH002839)</Fit>
        <Tri $c="#444" />
        <BellBox><svg width="26" height="26" viewBox="0 0 26 26" fill="none" stroke="#555" strokeWidth="1.300"><path d="M3 20.500q3-2 3-10 0-7 7-7t7 7q0 8 3 10zM13 1v2" /><path d="M10 22.500h6l-2 2h-2z" fill="#555" /></svg><BellCount>0</BellCount></BellBox>
      </Stops>
    </AppHead>
    <Work>
      <Rail>{RailIcons.map((I, i) => <React.Fragment key={i}>{I}</React.Fragment>)}</Rail>
      <Page>
        <TabBand>
          <AppTab $w={185} $on><Stops $at={[10, 37, 149, 170]} $h={34}>
            <svg width="20" height="20" viewBox="0 0 20 20"><path d="M11 0a9.500 9.500 0 1 1-10.800 11H11z" fill="#58585a" /><path d="M9 1v8H.5A9 9 0 0 1 9 1z" fill="#58585a" /></svg>
            <Fit w={49}>Portfolio</Fit><PinI c="#888" tilt /><WinX c="#999" s={10} w={1.300} />
          </Stops></AppTab>
          <AppTab $w={260}><Stops $at={[10, 37, 147]} $h={34}>
            <svg width="20" height="20" viewBox="0 0 20 20" fill="none" stroke="#aaa"><circle cx="10" cy="10" r="9" /><path d="M10.500 4v6.500H5" /></svg>
            <Fit w={26}>Time</Fit><PinI c="#000" />
          </Stops></AppTab>
        </TabBand>
        <Heading $mt={13} $h={29} $pb={5}><Fit w={87}>My portfolio</Fit></Heading>
        <Links $h={229}>{["My portfolio view", "Create Bill", "Open Bill", "Create Adjustment Note", "Approve Bill", "Debtor Management"].map((t, i) => <LinkRow key={t} $off={i === 4}><Dot /><LinkText>{t}</LinkText></LinkRow>)}</Links>
        <Bills>
          <BillsBar><Fit w={132}>My unprocessed bills:</Fit>
            <svg width="15" height="14" viewBox="0 0 15 14" fill="none" stroke="#fff" strokeWidth="2.200"><path d="M1.500 6A6 5.500 0 0 1 12 3.500M13.500 8A6 5.500 0 0 1 3 10.500" /><path d="M14 0v6H8zM1 14V8h6z" fill="#fff" stroke="none" /></svg></BillsBar>
          <BHead><BCell $p={6} $sep>Debtor Name</BCell><BCell $p={6} $sep>Bill No.</BCell><BCell $r={20} $sep>Total Net Bill Amt</BCell><i /></BHead>
          <BBody>
            <div>{BILLS.map(b => <BRow key={b[1]}><BCell>{b[0]}</BCell><BCell>{b[1]}</BCell><BCell $r={5}>{b[2]}</BCell></BRow>)}</div>
            <BScroll><Chevron d="up" s={12} w={2.400} /><BThumb /><Chevron d="down" s={12} w={2.400} /></BScroll>
          </BBody>
        </Bills>
        <Heading $mt={27} $h={20}>
          <svg width="11" height="12" viewBox="0 0 11 12"><circle cx="5.500" cy="6" r="5.500" fill="#404041" /><path d="M5.500 2v2M4 5.500h2V9M3.800 9h3.700" stroke="#fff" strokeWidth="1.500" fill="none" /></svg>
          <Fit w={32}>Help</Fit></Heading>
        <Links $h={42}>{["Knowledge Base", "About Portfolio"].map(t => <LinkRow key={t}><Dot /><LinkText>{t}</LinkText></LinkRow>)}</Links>
      </Page>
    </Work>
  </>;
}

/* ================= billing dialog ================= */
const Dialog = styled.div`position:absolute;left:422px;top:63px;width:1226px;height:825px;border:1px solid #efc044;border-top:0;background:#fff;box-shadow:0 6px 22px rgba(0,0,0,.38);display:flex;flex-direction:column;font:11px ${VERDANA};letter-spacing:.13px;color:#222;`;
const DTitle = styled.div`height:31px;background:#f9c222;flex:none;font-family:${UI};color:#000;`;
const Banner = styled.div`height:59px;background:${MAROON};color:#fff;padding:6px 0 0 6px;flex:none;display:flex;flex-direction:column;gap:8px;align-items:flex-start;`;
const Section = styled.div`width:250px;height:18px;margin-top:${p => p.$mt}px;background:${MAROON};color:#fff;display:flex;align-items:center;justify-content:space-between;padding:0 5px 2px 15px;flex:none;`;
const Panel = styled.div`border:1px solid #4682b4;height:${p => p.$h}px;flex:none;padding-top:${p => p.$pt || 0}px;`;
const L = styled.span`color:#000;white-space:pre;`;
const V = styled.span`color:#707070;white-space:pre;`;
const Input = styled.div`width:${p => p.$w}px;height:23px;border:1px solid #8b8b8b;box-shadow:inset 0 2px 1px -1px #ddd;background:#fff;display:flex;align-items:center;padding-left:${p => p.$pl || 6}px;color:#555;white-space:pre;justify-content:space-between;${p => p.$r && css`justify-content:flex-end;padding-right:6px;`}`;
const Addon = styled.div`width:22px;height:21px;background:#f1f1f1;border-left:1px solid #8b8b8b;display:flex;align-items:center;justify-content:center;`;
const Btn = styled.div`width:${p => p.$w || 100}px;height:24px;border:1px solid #8b8b8b;background:#ddd;color:#333;display:flex;align-items:center;justify-content:center;white-space:pre;flex:none;margin-left:${p => p.$ml || 0}px;`;
const ToolRow = styled.div`height:24px;background:${MAROON};display:flex;`;
const TCOLS = "121px 80px 60px 80px 82px 200px 200px 200px 199px";
const THead = styled.div`display:grid;grid-template-columns:${TCOLS};height:25px;background:${BEIGE};border-bottom:2px solid #c3bfae;`;
const TRow = styled.div`display:grid;grid-template-columns:${TCOLS};height:25px;background:#fcfcfc;border-bottom:1px solid #ddd8c4;align-items:center;`;
const TTotal = styled(TRow)`background:${BEIGE};border-bottom:2px solid #bfbaa6;font-weight:700;padding-top:1px;`;
const TH = styled.div`display:flex;align-items:center;white-space:pre;padding:0 9px 0 6px;border-right:1px solid #c3bfae;justify-content:${p => p.$r ? "flex-end" : "flex-start"};`;
const TD = styled.div`display:flex;align-items:center;white-space:pre;padding:0 5px 0 5px;justify-content:${p => p.$r ? "flex-end" : "flex-start"};`;
const Blank = styled.div`height:158px;background:#fcfcfc;`;
const HBar = styled.div`height:17px;background:#fcfcfc;padding-left:341px;`;
const HBarIn = styled.div`height:17px;background:#efefef;display:flex;align-items:center;padding-left:16px;`;
const HBarThumb = styled.i`width:275px;height:17px;background:#cbcbcb;margin:0 194px 0 358px;`;
const NextRow = styled.div`display:flex;justify-content:flex-end;`;
const Foot = styled.div`display:flex;justify-content:flex-end;margin-top:81px;flex:none;`;
const DStatus = styled.div`height:23px;border-top:1px solid #d5d5d5;background:#f0f0f0;flex:none;color:#111;font-family:${UI};`;
const Dbl = () => <svg width="9" height="9" viewBox="0 0 9 9" fill="none" stroke="#fff" strokeWidth="1.500"><path d="M.8.800 4.300 4.500.8 8.200M4.500.800 8 4.500 4.500 8.200" /></svg>;
const FORM = [10, 165, 457, 639, 791, 900, 1030];

function BillingDialog() {
  return <Dialog>
    <DTitle><Stops $at={[9, 29, 1105, 1150, 1196]} $h={31}>
      <IeIcon s={15} /><Fit w={293} $s={12}>Portfolio - Billing Instructions - (PRD) - Internet Explorer</Fit><WinMin c="#000" /><WinMax c="#000" /><WinX c="#000" />
    </Stops></DTitle>
    <Banner><Fit w={122} $b>Bill Creation Wizard</Fit><Fit w={299}>Please complete the following sections to create a bill.</Fit></Banner>
    <Section $mt={7}><span>Bill Options</span><Dbl /></Section>
    <Section $mt={5}><span>Bill Summary</span><Dbl /></Section>
    <Panel $h={220} $pt={2}>
      <Stops $at={FORM} $h={24}><L>Bill Office</L><V>Manila</V><L>Bill Operating Unit</L>
        <Input $w={250} $pl={8}>781 - BSP Business Services<FieldEnd $mr={9}><Chevron d="down" c="#111" s={11} w={2} /></FieldEnd></Input><i /><L>Bill Status</L><V>New</V></Stops>
      <Stops $at={FORM} $h={24}><L>Bill No.</L><V>99800859</V><L>Bill Entity</L><V>PH 090  PwC BSP Co. Ltd.</V><i /><L>Charge Type</L><V>External Billable</V></Stops>
      <Stops $at={FORM} $h={26}><L>Bill Date</L>
        <Input $w={280}>5/12/2019<Addon><svg width="11" height="11" viewBox="0 0 11 11" fill="none" stroke="#666"><path d="M.5 2h10v8.500H.5z" /><path d="M1 3h9M3 0v2M8 0v2" strokeWidth="1.500" /><path d="M1 5.500h9M1 8h9M3.500 4v6M6.500 4v6" /></svg></Addon></Input>
        <L>Partner</L><Input $w={147}><Fit w={129}>Paul Chester See - BSP</Fit></Input><Input $w={98} $pl={5}>PH003369<Addon><MagIcon /></Addon></Input><L>VAT Rate %</L><V>0.00</V></Stops>
      <Stops $at={FORM} $h={27}><L>Period End</L><V>5/15/2019</V><L>Manager</L><Input $w={147}><Fit w={131}>JIMMY D. DISQUETADO</Fit></Input><Input $w={98} $pl={5}>PH003326<Addon><MagIcon /></Addon></Input><L>Created By</L><V>Jay Armand Ogayon</V></Stops>
      <Stops $at={FORM} $h={23}><i /><i /><i /><i /><i /><L>Updated by</L><V>Jay Armand Ogayon</V></Stops>
      <Stops $at={[10, 165]} $h={24} $mt={20}><L>Contact</L><V>Mr Joeben A. Tai, President and CEO</V></Stops>
      <Stops $at={[10, 165, 1123]} $h={26}><L>Debtor</L><V>Grand Taipan Land Development Inc.  31005999/009-157-850-000VAT</V><Btn $w={97}>Change Debtor</Btn></Stops>
      <Stops $at={[10, 165]} $h={22}><L>Debtor Address</L><V>3/F Polar Center Bldg., Wack Wack, Greenhills, Edsa,, Mandaluyong City ,  Philippines</V></Stops>
    </Panel>
    <Section $mt={5}><span>Bill Details</span><Dbl /></Section>
    <Panel $h={315}>
      <ToolRow><Btn>Add Item</Btn><Btn $ml={15}>Wip Details</Btn><Btn $ml={8}>Bill Summary</Btn><Btn $ml={8}>Recalculate</Btn><FieldEnd $mr={0}><Btn $w={165}>Print Bill Instruction Report</Btn></FieldEnd></ToolRow>
      <THead><TH>Client Name</TH><TH>Client Code</TH><TH>Job C...</TH><TH>Job Office</TH><TH $r>Accruals</TH><TH $r>Net Billable WIP</TH><TH $r>Est. Final Bill Fee</TH><TH $r>Final Bill Fee</TH><TH $r>Net Bill Amount</TH></THead>
      <TRow><TD>Grand Taipan Lan...</TD><TD>31005999</TD><TD>J018</TD><TD>Manila</TD><TD $r>0.00</TD><TD $r>135,250.50</TD><TD $r>135,250.50</TD><TD $r><Input $w={190} $r>5,000.00</Input></TD><TD $r>5,000.00</TD></TRow>
      <Blank />
      <HBar><HBarIn><Chevron d="left" s={11} w={2.300} /><HBarThumb /><Chevron d="right" s={11} w={2.300} /></HBarIn></HBar>
      <TTotal><TD /><TD /><TD /><TD /><TD $r>0.00</TD><TD $r>135,250.50</TD><TD $r>135,250.50</TD><TD $r>5,000.00</TD><TD $r>5,000.00</TD></TTotal>
      <NextRow><Btn>Next &gt;&gt;</Btn></NextRow>
    </Panel>
    <Foot><Btn>Copy doclink</Btn><Btn $ml={4}>History</Btn><Btn $ml={4}>Delete Bill</Btn><Btn $ml={23}>OK</Btn><Btn $ml={4}>Close</Btn></Foot>
    <DStatus><Stops $at={[1135, 1150, 1193, 1214]} $h={21}>
      <svg width="12" height="12" viewBox="0 0 12 12" fill="none"><circle cx="4.500" cy="4.500" r="4" fill="#cfe4f7" stroke="#3a78b8" /><path d="M4.500 2v5M2 4.500h5" stroke="#1a5fa8" strokeWidth="1.500" /><path d="M7.500 7.500 11.500 11.500" stroke="#777" strokeWidth="2" /></svg>
      <Fit w={28} $s={11.5}>100%</Fit><Tri $w={4} $c="#111" />
      <svg width="9" height="9" viewBox="0 0 9 9" fill="#b5b5b5"><path d="M6 0h2v2H6zM3 3h2v2H3zM6 3h2v2H6zM0 6h2v2H0zM3 6h2v2H3zM6 6h2v2H6z" /></svg>
    </Stops></DStatus>
  </Dialog>;
}

function BrowserWin() {
  return <Browser>
    <Nav>
      <NavTop><Stops $at={[1798, 1843, 1889]} $h={12}><WinMin c="#888" /><WinRestore c="#888" /><WinX c="#888" /></Stops></NavTop>
      <Stops $at={[1, 42, 71, 1356, 1845, 1869, 1894]} $h={38}>
        <Circle $d={38}><Arrow s={24} /></Circle><Circle $d={27}><Arrow s={16} flip /></Circle>
        <Field $w={1279} $pl={4}><PageIcon /><Lead $w={4} />
          <Fit w={553} $s={12}><Ink>https</Ink>://ipowerph.eps.ad.<Ink>pwcinternal.com</Ink>/#/modules/legacy/open?url=gui%2Fiportfolio%2Fdefault.aspx</Fit>
          <FieldEnd $mr={5} $gap={7}><Tri /><svg width="10" height="11" viewBox="0 0 10 11"><path d="M0 5h10v6H0z" fill="#666" /><path d="M2.500 5V3a2.500 2.500 0 0 1 5 0v2" fill="none" stroke="#666" strokeWidth="1.400" /></svg><svg width="11" height="11" viewBox="0 0 11 11" fill="none" stroke="#666" strokeWidth="1.600"><path d="M9 3A4.300 4.300 0 1 0 9.800 6.500" /><path d="M10.500 0v4.500H6z" fill="#666" stroke="none" /></svg></FieldEnd>
        </Field>
        <Field $w={478} $pl={7}><Fit w={43} $s={12} $c="#333">Search...</Fit><FieldEnd $mr={10} $gap={5}><SearchIcon s={14} c="#666" /><Tri /></FieldEnd></Field>
        <svg width="18" height="18" viewBox="0 0 18 18" fill="none" stroke="#aaa"><path d="M1 9.500 9 2l8 7.500M3.500 9v7h4v-5h3v5h4V9" strokeWidth="1.200" /></svg>
        <svg width="18" height="18" viewBox="0 0 18 18" fill="none" stroke="#aaa" strokeWidth="1.200"><path d="M9 1l2.300 5.700 6 .4-4.600 3.900 1.500 5.900L9 13.700 3.800 16.900l1.500-5.900L.7 7.100l6-.4z" /></svg>
        <svg width="18" height="18" viewBox="0 0 18 18" fill="none" stroke="#aaa"><circle cx="9" cy="9" r="6" /><circle cx="9" cy="9" r="2.500" /><circle cx="9" cy="9" r="7.500" strokeWidth="2" strokeDasharray="2.500 3.390" /></svg>
      </Stops>
    </Nav>
    <TabRow>
      <PageTab><PageIcon /><Lead $w={4} /><Fit w={153} $s={11.5}>iPower - Built by PwC, for P...</Fit><FieldEnd $mr={5}><WinX c="#999" s={8} w={2.200} /></FieldEnd></PageTab>
      <NewTab><svg width="15" height="15" viewBox="0 0 15 15"><path d="M1.500 2.500h9v12h-9z" fill="#fff" stroke="#999" /><path d="M11 0v7M7.500 3.500h7M8.500 1l5 5M13.500 1l-5 5" stroke="#f0a020" strokeWidth="1.200" /></svg></NewTab>
    </TabRow>
    <BrowserPage />
    <BottomTaskbar />
    <BillingDialog />
  </Browser>;
}

const Desktop = styled.main`width:3840px;height:1080px;display:flex;overflow:hidden;`;
export default function App() {
  return <><Global /><Desktop><SideTaskbar /><Excel /><BrowserWin /></Desktop></>;
}
